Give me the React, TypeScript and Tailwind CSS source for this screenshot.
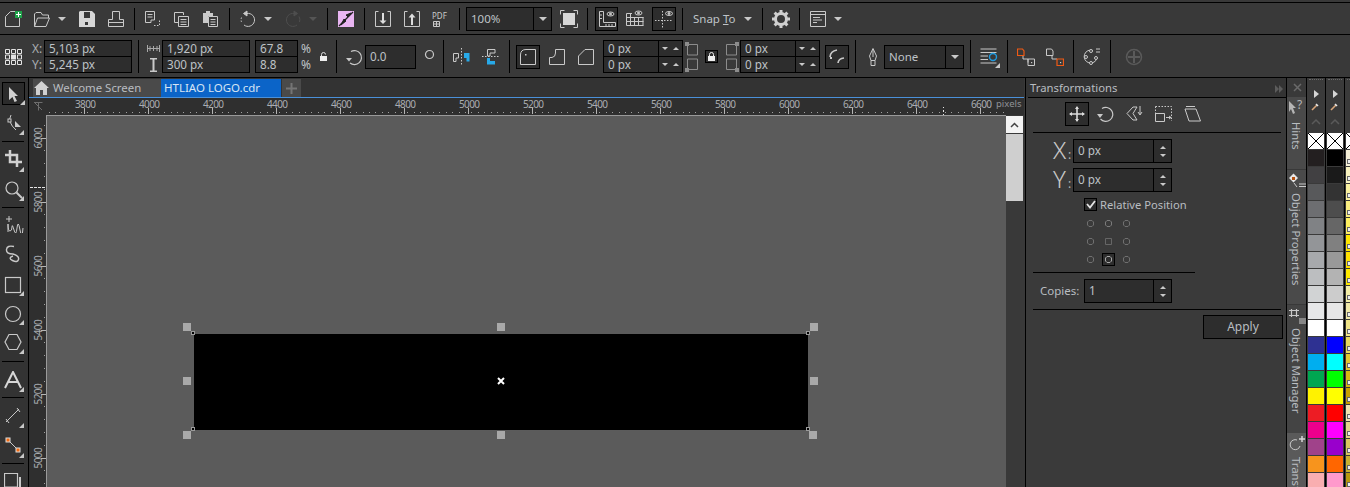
import React from "react";

const FONT = "font-['Noto_Sans','Open_Sans',sans-serif]";

// small svg wrapper, position comes through className
function Ico({ className, w, h, children }: { className: string; w: number; h: number; children: React.ReactNode }) {
  return (
    <svg
      className={`absolute ${className}`}
      width={w}
      height={h}
      viewBox={`0 0 ${w} ${h}`}
      fill="none"
      stroke="#c9c9c9"
      strokeWidth="1"
    >
      {children}
    </svg>
  );
}

function Sep({ className }: { className: string }) {
  return <div className={`absolute w-px bg-black ${className}`} />;
}

function Down({ className, dim }: { className: string; dim?: boolean }) {
  return (
    <div
      className={`absolute h-0 w-0 border-x-[4px] border-t-[4px] border-x-transparent ${
        dim ? "border-t-[#555]" : "border-t-[#c9c9c9]"
      } ${className}`}
    />
  );
}

function Corner({ className }: { className: string }) {
  return (
    <div className={`absolute h-0 w-0 border-b-[5px] border-l-[5px] border-b-[#c9c9c9] border-l-transparent ${className}`} />
  );
}

function Field({ className, children }: { className: string; children: React.ReactNode }) {
  return (
    <div className={`absolute flex items-center border border-black bg-[#2d2d2d] pl-1 text-[11.7px] text-[#bfc3c7] ${className}`}>
      {children}
    </div>
  );
}

function Spin({ className }: { className: string }) {
  return (
    <div className={`absolute flex items-center justify-center gap-[5px] border-l border-black ${className}`}>
      <div className="h-0 w-0 border-x-[3px] border-t-[3px] border-x-transparent border-t-[#c9c9c9]" />
      <div className="h-0 w-0 border-x-[3px] border-b-[3px] border-x-transparent border-b-[#c9c9c9]" />
    </div>
  );
}

function VSpin({ className }: { className: string }) {
  return (
    <div className={`absolute flex flex-col items-center justify-center gap-[5px] border-l border-black ${className}`}>
      <div className="h-0 w-0 border-x-[3px] border-b-[3px] border-x-transparent border-b-[#c9c9c9]" />
      <div className="h-0 w-0 border-x-[3px] border-t-[3px] border-x-transparent border-t-[#c9c9c9]" />
    </div>
  );
}

function Handle({ className }: { className: string }) {
  return <div className={`absolute h-2 w-2 bg-[#a9a9a9] ${className}`} />;
}

const hLabels = ["3800", "4000", "4200", "4400", "4600", "4800", "5000", "5200", "5400", "5600", "5800", "6000", "6200", "6400", "6600"];
const vLabels = ["6000", "5800", "5600", "5400", "5200", "5000"];

const col1 = ["#231f20", "#414042", "#58595b", "#6d6e71", "#808285", "#939598", "#a7a9ac", "#bcbec0", "#d1d3d4", "#e6e7e8", "#ffffff", "#2e3192", "#00aeef", "#00a651", "#fff200", "#ed1c24", "#ec008c", "#a0428a", "#f7941d", "#f9aeb0"];
const col2 = ["#000000", "#1a1a1a", "#333333", "#4d4d4d", "#666666", "#808080", "#999999", "#b3b3b3", "#cccccc", "#e6e6e6", "#ffffff", "#0000ff", "#00ffff", "#00ff00", "#ffff00", "#ff0000", "#ff00ff", "#9900cc", "#ff6600", "#ff99cc"];
const col3 = ["#f5f0d8", "#f8f2c0", "#f9f0a0", "#fbee80", "#fff060", "#ffe600", "#ffe000", "#ffe900", "#f3eda8", "#f0e8a8", "#f0e488", "#e8d860", "#e0c830", "#d8b810", "#c8a000", "#f0e4b0", "#e4d488", "#d8c860", "#c8b030", "#b89810"];

function Swatches({ colors, className, marks }: { colors: string[]; className: string; marks?: boolean }) {
  return (
    <div className={`absolute top-[133px] flex flex-col gap-px ${className}`}>
      <svg width="16" height="16" viewBox="0 0 16 16" className="bg-white">
        <path d="M0 0L16 16M16 0L0 16" stroke="#000" />
      </svg>
      {colors.map((c, i) => (
        <div key={i} className="relative h-4 w-4" style={{ backgroundColor: c }}>
          {marks && <div className="absolute left-[1px] top-[9px] h-[5px] w-[5px] border border-[#666] bg-[#eee]" />}
        </div>
      ))}
    </div>
  );
}

function TopBar() {
  return (
    <>
      {/* row 1 */}
      <Ico className="left-[4px] top-[10px]" w={18} h={18}>
        <path d="M1.5 6.5L6.5 1.5H11M15.5 8V16.5H1.5V6.5" />
        <rect x="11" y="1" width="7" height="7" fill="#1fa34a" stroke="none" />
        <path d="M14.5 2V7M12 4.5H17" stroke="#fff" />
      </Ico>
      <Ico className="left-[33px] top-[11px]" w={18} h={17}>
        <path d="M1.5 15.5V3L3 1.5H8L9.5 4H15.5V7" />
        <path d="M1.5 15.5H13L16.5 7H4.5L1.5 15.5Z" />
      </Ico>
      <Down className="left-[58px] top-[17px]" />
      <Ico className="left-[79px] top-[11px]" w={17} h={17}>
        <path d="M1 0H13L16 3V16H0V1Z" fill="#d6d6d6" stroke="none" />
        <rect x="5" y="1" width="6" height="6" fill="#383838" stroke="none" />
        <rect x="6" y="11" width="3" height="3" fill="#383838" stroke="none" />
      </Ico>
      <Ico className="left-[107px] top-[10px]" w={18} h={18}>
        <path d="M5.5 9.5V1.5H12.5V9.5M5.5 9.5H1.5V16.5H16.5V9.5H12.5M1.5 12.5H16.5" />
      </Ico>
      <Sep className="left-[134px] top-[8px] h-[22px]" />
      <Ico className="left-[144px] top-[10px]" w={18} h={18}>
        <path d="M1.5 1.5H10.5V10H7V12.5H1.5ZM3.5 4.5H8.5M3.5 7H8.5" />
        <path d="M10 15.5H15.5V10" strokeDasharray="1.5 1.5" />
      </Ico>
      <Ico className="left-[173px] top-[10px]" w={18} h={18}>
        <path d="M1.5 2.5H10.5V5M1.5 2.5V12.5H5" />
        <path d="M5.5 6.5H15.5V16.5H5.5ZM7.5 9.5H13.5M7.5 12H13.5M7.5 14.5H13.5" />
      </Ico>
      <Ico className="left-[202px] top-[10px]" w={18} h={18}>
        <path d="M1 3H4V1H8V3H11V6H6V13H1Z" fill="#c9c9c9" stroke="none" />
        <path d="M6.5 6.5H15.5V16.5H6.5ZM8.5 9.5H13.5M8.5 12H13.5M8.5 14.5H13.5" />
      </Ico>
      <Sep className="left-[229px] top-[8px] h-[22px]" />
      <Ico className="left-[239px] top-[10px]" w={18} h={18}>
        <path d="M8 3.5A6.5 6.5 0 1 1 5 15" />
        <path d="M2.5 12A6.5 6.5 0 0 1 3 6.5" strokeDasharray="1.5 1.5" />
        <path d="M8 1V6L4.5 3.5Z" fill="#c9c9c9" />
      </Ico>
      <Down className="left-[264px] top-[17px]" />
      <Ico className="left-[284px] top-[10px]" w={18} h={18}>
        <path d="M10 3.5A6.5 6.5 0 1 0 13 15M15.5 12A6.5 6.5 0 0 0 15 6.5" stroke="#4e4e4e" />
        <path d="M10 1V6L13.5 3.5Z" fill="#4e4e4e" stroke="#4e4e4e" />
      </Ico>
      <Down className="left-[309px] top-[17px]" dim />
      <Sep className="left-[327px] top-[8px] h-[22px]" />
      <Ico className="left-[338px] top-[11px]" w={16} h={16}>
        <rect x="0" y="0" width="16" height="16" fill="#e9b5f2" stroke="none" />
        <path d="M1 15L15 1" stroke="#222" strokeWidth="1.2" />
        <path d="M6 8L8 10L3 14ZM10 6L8 4L13 2Z" fill="#222" stroke="#222" />
      </Ico>
      <Sep className="left-[364px] top-[8px] h-[22px]" />
      <Ico className="left-[375px] top-[11px]" w={16} h={16}>
        <path d="M3.5 .5H.5V15.5H15.5V.5H12.5" />
        <path d="M8 2V11" stroke="#ddd" strokeWidth="2" />
        <path d="M4.5 9.5H11.5L8 13Z" fill="#ddd" stroke="none" />
      </Ico>
      <Ico className="left-[404px] top-[11px]" w={16} h={16}>
        <path d="M3.5 .5H.5V15.5H15.5V.5H12.5" />
        <path d="M8 6V14" stroke="#ddd" strokeWidth="2" />
        <path d="M4.5 6.5H11.5L8 2.5Z" fill="#ddd" stroke="none" />
      </Ico>
      <span className="absolute left-[432px] top-[11px] text-[8px] leading-[10px] text-[#c9c9c9]">PDF</span>
      <Ico className="left-[433px] top-[21px]" w={8} h={7}>
        <path d="M.5 .5H6.5V5.5H.5ZM3.5 .5V5.5M.5 3H6.5" />
      </Ico>
      <Sep className="left-[459px] top-[8px] h-[22px]" />
      <Field className="left-[466px] top-[7px] h-[24px] w-[86px] !text-[11.5px]">100%</Field>
      <div className="absolute left-[533px] top-[8px] h-[22px] w-px bg-black" />
      <Down className="left-[539px] top-[17px]" />
      <Ico className="left-[560px] top-[10px]" w={18} h={18}>
        <path d="M.5 4.5V.5H4.5M13.5 .5H17.5V4.5M17.5 13.5V17.5H13.5M4.5 17.5H.5V13.5" />
        <rect x="3" y="3" width="12" height="12" fill="#d6d6d6" stroke="none" />
      </Ico>
      <Sep className="left-[587px] top-[8px] h-[22px]" />
      <div className="absolute left-[595px] top-[7px] h-[24px] w-[23px] border border-black bg-[#2d2d2d]" />
      <Ico className="left-[597px] top-[10px]" w={20} h={18}>
        <path d="M2.5 1.5V16.5H18.5V12.5H6.5V1.5ZM2.5 5H5M2.5 8.5H5M9 16V14M12 16V14M15 16V14" />
        <ellipse cx="13.5" cy="4" rx="3.5" ry="2" />
        <circle cx="13.5" cy="4" r="1" fill="#c9c9c9" />
      </Ico>
      <Ico className="left-[626px] top-[10px]" w={18} h={18}>
        <path d="M.5 3.5H6M.5 7.5H17.5M.5 11.5H17.5M.5 15.5H17.5M.5 3.5V15.5M4.5 3.5V15.5M8.5 7V15.5M12.5 7V15.5M17 7V15.5" />
        <ellipse cx="12.5" cy="3" rx="3.5" ry="2" />
        <circle cx="12.5" cy="3" r="1" fill="#c9c9c9" />
      </Ico>
      <div className="absolute left-[652px] top-[7px] h-[24px] w-[24px] border border-black bg-[#2d2d2d]" />
      <Ico className="left-[654px] top-[10px]" w={20} h={18}>
        <path d="M1 10.5H18M8.5 1V18" strokeDasharray="1.5 1.5" />
        <ellipse cx="15" cy="3.5" rx="3.5" ry="2" />
        <circle cx="15" cy="3.5" r="1" fill="#c9c9c9" />
      </Ico>
      <Sep className="left-[682px] top-[8px] h-[22px]" />
      <span className="absolute left-[693px] top-[10px] text-[11.5px] leading-[18px] text-[#bfc3c7]">
        Snap <span className="underline">T</span>o
      </span>
      <Down className="left-[744px] top-[17px]" />
      <Sep className="left-[762px] top-[8px] h-[22px]" />
      <Ico className="left-[772px] top-[10px]" w={18} h={18}>
        <circle cx="9" cy="9" r="5.5" stroke="#d0d0d0" strokeWidth="3" />
        <path d="M9 0V3M9 15V18M0 9H3M15 9H18M2.6 2.6L4.8 4.8M13.2 13.2L15.4 15.4M2.6 15.4L4.8 13.2M13.2 4.8L15.4 2.6" stroke="#d0d0d0" strokeWidth="3" />
      </Ico>
      <Sep className="left-[799px] top-[8px] h-[22px]" />
      <Ico className="left-[810px] top-[10px]" w={17} h={17}>
        <path d="M.5 1.5H15.5V16.5H.5ZM.5 4.5H15.5M3 7.5H10M3 10H12M3 12.5H7" />
      </Ico>
      <Down className="left-[834px] top-[17px]" />

      {/* row 2 */}
      <Ico className="left-[5px] top-[49px]" w={17} h={16}>
        <path d="M.5 .5H4.5V4.5H.5ZM6.5 .5H10.5V4.5H6.5ZM12.5 .5H16.5V4.5H12.5ZM.5 6H4.5V10H.5ZM12.5 6H16.5V10H12.5ZM.5 11.5H4.5V15.5H.5ZM6.5 11.5H10.5V15.5H6.5ZM12.5 11.5H16.5V15.5H12.5Z" stroke="#e4e4e4" />
        <rect x="6" y="5.5" width="5" height="5" fill="#e4e4e4" stroke="none" />
      </Ico>
      <span className="absolute left-[32px] top-[40px] text-[12px] leading-[17px] text-[#a9adb1]">X:</span>
      <span className="absolute left-[32px] top-[56px] text-[12px] leading-[17px] text-[#a9adb1]">Y:</span>
      <Field className="left-[44px] top-[40px] h-[17px] w-[88px]">5,103 px</Field>
      <Field className="left-[44px] top-[56px] h-[17px] w-[88px]">5,245 px</Field>
      <Sep className="left-[138px] top-[40px] h-[33px]" />
      <Ico className="left-[147px] top-[45px]" w={13} h={7}>
        <path d="M.5 0V7M12.5 0V7M1 3.5H12M3 1V6M6.5 1V6M10 1V6" stroke="#a9a9a9" />
      </Ico>
      <Ico className="left-[149px] top-[58px]" w={9} h={14}>
        <path d="M1 .5H8M1 13.5H8M4.5 1V13" stroke="#c9c9c9" strokeWidth="2" />
      </Ico>
      <Field className="left-[162px] top-[40px] h-[17px] w-[88px]">1,920 px</Field>
      <Field className="left-[162px] top-[56px] h-[17px] w-[88px]">300 px</Field>
      <Field className="left-[255px] top-[40px] h-[17px] w-[43px]">67.8</Field>
      <Field className="left-[255px] top-[56px] h-[17px] w-[43px]">8.8</Field>
      <span className="absolute left-[301px] top-[40px] text-[12px] leading-[17px] text-[#bfc3c7]">%</span>
      <span className="absolute left-[301px] top-[56px] text-[12px] leading-[17px] text-[#bfc3c7]">%</span>
      <Ico className="left-[320px] top-[52px]" w={7} h={9}>
        <path d="M1.5 4V2.5A2 2 0 0 1 5.5 2.5" stroke="#ddd" />
        <rect x="0" y="4" width="7" height="5" fill="#eee" stroke="none" />
      </Ico>
      <Sep className="left-[336px] top-[40px] h-[33px]" />
      <Ico className="left-[346px] top-[49px]" w={18} h={17}>
        <path d="M5 2.5A7 7 0 1 1 4 14" strokeWidth="1.2" />
        <path d="M0 9H6L3 12.5Z" fill="#c9c9c9" stroke="none" />
      </Ico>
      <Field className="left-[365px] top-[45px] h-[24px] w-[51px]">0.0</Field>
      <Ico className="left-[424px] top-[49px]" w={11} h={11}>
        <circle cx="5.5" cy="5.5" r="4" strokeWidth="1.2" />
      </Ico>
      <Sep className="left-[443px] top-[40px] h-[33px]" />
      <Ico className="left-[453px] top-[48px]" w={17} h={17}>
        <path d="M8.5 0V17" strokeDasharray="1.5 1.5" />
        <path d="M.5 5.5H5.5V10H3V13.5H.5Z" />
        <path d="M11 5H16.5V13.5H13.5V10H11Z" fill="#28a9e8" stroke="none" />
      </Ico>
      <Ico className="left-[482px] top-[48px]" w={17} h={17}>
        <path d="M0 8.5H17" strokeDasharray="1.5 1.5" />
        <path d="M5.5 1.5H13V5H8V8H5.5Z" />
        <path d="M5 10H8V13H13V16.5H5Z" fill="#28a9e8" stroke="none" />
      </Ico>
      <Sep className="left-[509px] top-[40px] h-[33px]" />
      <div className="absolute left-[516px] top-[45px] h-[24px] w-[24px] border border-black bg-[#2d2d2d]" />
      <Ico className="left-[520px] top-[49px]" w={16} h={16}>
        <path d="M.5 15.5V6Q.5 .5 6 .5H15.5V15.5Z" />
        <rect x="5" y="5" width="1.5" height="1.5" fill="#c9c9c9" stroke="none" />
      </Ico>
      <Ico className="left-[549px] top-[49px]" w={16} h={16}>
        <path d="M.5 15.5V8.5H3Q6.5 8 6.5 4V.5H15.5V15.5Z" />
      </Ico>
      <Ico className="left-[578px] top-[49px]" w={16} h={16}>
        <path d="M.5 15.5V7L7 .5H15.5V15.5Z" />
      </Ico>
      <Field className="left-[603px] top-[40px] h-[17px] w-[80px]">0 px</Field>
      <Field className="left-[603px] top-[56px] h-[17px] w-[80px]">0 px</Field>
      <Spin className="left-[658px] top-[41px] h-[15px] w-[24px]" />
      <Spin className="left-[658px] top-[57px] h-[15px] w-[24px]" />
      <Ico className="left-[685px] top-[42px]" w={14} h={14}>
        <path d="M2.5 2.5H12.5V13H2.5Z" stroke="#8c8c8c" />
        <rect x="0" y="0" width="4" height="4" fill="#8c8c8c" stroke="none" />
      </Ico>
      <Ico className="left-[685px] top-[58px]" w={14} h={14}>
        <path d="M2.5 1H12.5V11.5H2.5Z" stroke="#8c8c8c" />
        <rect x="0" y="10" width="4" height="4" fill="#8c8c8c" stroke="none" />
      </Ico>
      <div className="absolute left-[705px] top-[50px] h-[13px] w-[13px] border border-black bg-[#2d2d2d]" />
      <Ico className="left-[708px] top-[52px]" w={7} h={9}>
        <path d="M1.5 4V2.5A2 2 0 0 1 5.5 2.5V4" stroke="#eee" />
        <rect x="0" y="4" width="7" height="5" fill="#eee" stroke="none" />
      </Ico>
      <Ico className="left-[725px] top-[42px]" w={14} h={14}>
        <path d="M1.5 2.5H11.5V13H1.5Z" stroke="#8c8c8c" />
        <rect x="10" y="0" width="4" height="4" fill="#8c8c8c" stroke="none" />
      </Ico>
      <Ico className="left-[725px] top-[58px]" w={14} h={14}>
        <path d="M1.5 1H11.5V11.5H1.5Z" stroke="#8c8c8c" />
        <rect x="10" y="10" width="4" height="4" fill="#8c8c8c" stroke="none" />
      </Ico>
      <Field className="left-[740px] top-[40px] h-[17px] w-[80px]">0 px</Field>
      <Field className="left-[740px] top-[56px] h-[17px] w-[80px]">0 px</Field>
      <Spin className="left-[795px] top-[41px] h-[15px] w-[24px]" />
      <Spin className="left-[795px] top-[57px] h-[15px] w-[24px]" />
      <div className="absolute left-[825px] top-[45px] h-[24px] w-[24px] border border-black bg-[#2d2d2d]" />
      <Ico className="left-[829px] top-[49px]" w={17} h={16}>
        <path d="M1 8Q1.5 2 8 1" strokeWidth="1.6" />
        <path d="M9 14Q9.5 9.5 15 9" strokeWidth="1.6" />
        <rect x="1" y="8" width="2" height="2" fill="#c9c9c9" stroke="none" />
      </Ico>
      <Sep className="left-[855px] top-[40px] h-[33px]" />
      <Ico className="left-[868px] top-[48px]" w={10} h={18}>
        <path d="M5 .5L8.5 8L7 12.5H3L1.5 8ZM5 1V9M3 12.5V17.5H7V12.5" />
      </Ico>
      <Field className="left-[884px] top-[45px] h-[24px] w-[80px] !text-[11.5px]">None</Field>
      <div className="absolute left-[945px] top-[46px] h-[22px] w-px bg-black" />
      <Down className="left-[951px] top-[55px]" />
      <Sep className="left-[970px] top-[40px] h-[33px]" />
      <Ico className="left-[980px] top-[48px]" w={20} h={20}>
        <path d="M.5 1H16.5M.5 4.5H16.5M.5 8H8M.5 11.5H8M.5 15H16.5" />
        <circle cx="13" cy="9" r="3.5" stroke="#1f9be0" strokeWidth="1.4" />
        <path d="M20 15V20H15Z" fill="#c9c9c9" stroke="none" />
      </Ico>
      <Sep className="left-[1007px] top-[40px] h-[33px]" />
      <Ico className="left-[1017px] top-[48px]" w={18} h={18}>
        <path d="M6 7.5V11H11V14.5" />
        <path d="M11 11H17.5V17.5H11Z" />
        <rect x="14" y="14" width="1.2" height="1.2" fill="#c9c9c9" stroke="none" />
        <path d="M.5 1H5.5L7 3V7.5H.5Z" stroke="#f05a14" strokeWidth="1.2" />
      </Ico>
      <Ico className="left-[1046px] top-[48px]" w={18} h={18}>
        <path d="M.5 1H5.5L7 3V7.5H.5Z" />
        <path d="M6 7.5V11H11" />
        <path d="M11 11H17.5V17.5H11Z" stroke="#f05a14" strokeWidth="1.2" />
        <rect x="14" y="14" width="1.2" height="1.2" fill="#c9c9c9" stroke="none" />
      </Ico>
      <Sep className="left-[1073px] top-[40px] h-[33px]" />
      <Ico className="left-[1083px] top-[48px]" w={18} h={17}>
        <path d="M10 2.5A6.5 6.5 0 1 0 14 10" />
        <circle cx="3" cy="9" r="1.5" fill="#383838" />
        <circle cx="8" cy="15" r="1.5" fill="#383838" />
        <circle cx="13" cy="10" r="1.5" fill="#383838" />
        <circle cx="8" cy="3" r="1.5" fill="#383838" />
        <path d="M13 1H17M13 4H17" />
      </Ico>
      <Sep className="left-[1110px] top-[40px] h-[33px]" />
      <Ico className="left-[1125px] top-[48px]" w={18} h={18}>
        <circle cx="9" cy="9" r="7.5" stroke="#5a5a5a" strokeWidth="1.5" />
        <path d="M9 3V15M3 9H15" stroke="#5a5a5a" strokeWidth="2" />
      </Ico>
    </>
  );
}

function LeftTools() {
  return (
    <div className="absolute left-0 top-[78px] h-[409px] w-[28px] bg-[#333333]">
      {/* y below is relative to 78 */}
      <div className="absolute left-[2px] top-[4px] h-[23px] w-[23px] border border-black bg-[#2b2b2b]" />
      <Ico className="left-[9px] top-[9px]" w={10} h={15}>
        <path d="M0 0L9 9H5.5L8 14L5.5 15L3.5 10L0 13Z" fill="#d0d0d0" stroke="none" />
      </Ico>
      <Corner className="left-[20px] top-[22px]" />
      <Ico className="left-[6px] top-[36px]" w={18} h={18}>
        <path d="M5 1Q1 8 10 16" />
        <rect x="2" y="5" width="3" height="3" fill="#333" />
        <path d="M9 7L15 13H9Z" fill="#c9c9c9" stroke="none" />
      </Ico>
      <Corner className="left-[19px] top-[52px]" />
      <div className="absolute left-[2px] top-[63px] h-px w-[22px] bg-black" />
      <Ico className="left-[5px] top-[72px]" w={17} h={17}>
        <path d="M5 0V12H17M0 5H12V17" stroke="#d0d0d0" strokeWidth="2.5" />
      </Ico>
      <Corner className="left-[19px] top-[89px]" />
      <Ico className="left-[5px] top-[103px]" w={18} h={18}>
        <circle cx="7" cy="7" r="6" strokeWidth="1.2" />
        <path d="M11.5 11.5L17 17" strokeWidth="2" />
      </Ico>
      <Corner className="left-[19px] top-[118px]" />
      <div className="absolute left-[2px] top-[129px] h-px w-[22px] bg-black" />
      <Ico className="left-[4px] top-[137px]" w={20} h={18}>
        <path d="M5 1V7M2 4H8" />
        <path d="M4 17V9Q4 16 6 16T8 12T10 15T13 13T16 15T19 13" />
      </Ico>
      <Ico className="left-[5px] top-[167px]" w={16} h={18}>
        <path d="M9 1.5Q2 0 1.5 4.5T8 9Q14.5 11 13.5 14.5T7.5 15.5T8 11" strokeWidth="1.4" />
      </Ico>
      <Ico className="left-[4px] top-[198px]" w={18} h={18}>
        <rect x="1.5" y="1.5" width="15" height="15" strokeWidth="1.2" />
      </Ico>
      <Corner className="left-[19px] top-[213px]" />
      <Ico className="left-[4px] top-[227px]" w={18} h={18}>
        <circle cx="9" cy="9" r="7.5" strokeWidth="1.2" />
      </Ico>
      <Corner className="left-[19px] top-[242px]" />
      <Ico className="left-[4px] top-[255px]" w={18} h={18}>
        <path d="M5 1.5H13L17 9L13 16.5H5L1 9Z" strokeWidth="1.2" />
      </Ico>
      <Corner className="left-[19px] top-[271px]" />
      <div className="absolute left-[2px] top-[283px] h-px w-[22px] bg-black" />
      <Ico className="left-[4px] top-[293px]" w={18} h={18}>
        <path d="M1 17L9 1L17 17M4 11H14" stroke="#d6d6d6" strokeWidth="2" />
      </Ico>
      <Corner className="left-[19px] top-[309px]" />
      <div className="absolute left-[2px] top-[319px] h-px w-[22px] bg-black" />
      <Ico className="left-[4px] top-[329px]" w={18} h={18}>
        <path d="M2 15L15 2M2 12L5 16M13 1L16 5" />
      </Ico>
      <Corner className="left-[19px] top-[345px]" />
      <Ico className="left-[4px] top-[358px]" w={18} h={18}>
        <path d="M4 4L14 14" />
        <rect x="2" y="2" width="4" height="4" fill="#f26a10" stroke="#ddd" />
        <rect x="12" y="12" width="4" height="4" fill="#f26a10" stroke="#ddd" />
      </Ico>
      <Corner className="left-[19px] top-[375px]" />
      <div className="absolute left-[2px] top-[385px] h-px w-[22px] bg-black" />
      <Ico className="left-[4px] top-[395px]" w={20} h={14}>
        <path d="M.5 .5H13.5V14H.5Z" strokeWidth="1.2" />
        <path d="M16 4V14" strokeWidth="2" />
      </Ico>
    </div>
  );
}

function Rulers() {
  return (
    <>
      {/* top ruler */}
      <div className="absolute left-[29px] top-[98px] h-[17px] w-[995px] bg-[#2f2f2f]" />
      <div className="absolute left-[29px] top-[98px] h-[389px] w-[17px] bg-[#2f2f2f]" />
      <Ico className="left-[34px] top-[102px]" w={9} h={9}>
        <path d="M0 .5H8.5M4.5 0V8.5M1 1L8 8" stroke="#6d6d6d" />
      </Ico>
      <div className="absolute left-[72px] top-[98px] flex text-[10px] leading-[12px] tracking-[-0.6px] text-[#a9adb1]">
        {hLabels.map((l) => (
          <span key={l} className="w-16 pl-[3px]">{l}</span>
        ))}
      </div>
      <span className="absolute left-[996px] top-[98px] text-[9.5px] leading-[12px] text-[#8f9397]">pixels</span>
      <svg className="absolute left-[46px] top-[107px]" width="960" height="8" viewBox="0 0 960 8">
        {Array.from({ length: 150 }, (_, i) => (
          <rect key={i} x={Math.round(3 + i * 6.4)} y="5" width="1" height="1" fill="#a0a0a0" />
        ))}
        {hLabels.map((_, i) => (
          <rect key={i} x={38 + i * 64} y="1" width="1" height="6" fill="#b5b5b5" />
        ))}
        <path d="M897.5 -1V8" stroke="#e6e6e6" strokeDasharray="2 2" />
      </svg>
      {/* left ruler */}
      <div className="absolute left-[32px] top-[106px] flex flex-col text-[10px] leading-[12px] tracking-[-0.6px] text-[#a9adb1]">
        {vLabels.map((l) => (
          <div key={l} className="flex h-16 items-center justify-center">
            <span className="rotate-180 [writing-mode:vertical-rl]">{l}</span>
          </div>
        ))}
      </div>
      <svg className="absolute left-[38px] top-[115px]" width="8" height="372" viewBox="0 0 8 372">
        {Array.from({ length: 30 }, (_, i) => (
          <rect key={i} x="6" y={Math.round(9.8 + i * 12.8)} width="1" height="1" fill="#a0a0a0" />
        ))}
        {vLabels.map((_, i) => (
          <rect key={i} x="3" y={23 + i * 64} width="5" height="1" fill="#b5b5b5" />
        ))}
      </svg>
      <div className="absolute left-[30px] top-[187px] h-0 w-[15px] border-t border-dashed border-[#e6e6e6]" />
    </>
  );
}

function Canvas() {
  return (
    <>
      <div className="absolute left-[46px] top-[115px] h-[372px] w-[960px] border-l border-t border-[#9a9a9a] bg-[#5b5b5b]" />
      {/* scrollbar */}
      <div className="absolute left-[1006px] top-[115px] h-[372px] w-[17px] bg-[#393939]" />
      <div className="absolute left-[1006px] top-[116px] flex h-[17px] w-[17px] items-center justify-center bg-[#f4f4f4]">
        <svg width="9" height="6" viewBox="0 0 9 6" fill="none" stroke="#444" strokeWidth="1.5">
          <path d="M1 5L4.5 1.5L8 5" />
        </svg>
      </div>
      <div className="absolute left-[1006px] top-[134px] h-[67px] w-[17px] bg-[#cfcfcf]" />

      {/* selected rectangle */}
      <div className="absolute left-[194px] top-[334px] h-[96px] w-[614px] bg-black" />
      <div className="absolute left-[191px] top-[331px] h-[4px] w-[4px] border border-[#9a9a9a] bg-black" />
      <div className="absolute left-[806px] top-[331px] h-[4px] w-[4px] border border-[#9a9a9a] bg-black" />
      <div className="absolute left-[191px] top-[427px] h-[4px] w-[4px] border border-[#9a9a9a] bg-black" />
      <div className="absolute left-[806px] top-[427px] h-[4px] w-[4px] border border-[#9a9a9a] bg-black" />
      <Handle className="left-[183px] top-[323px]" />
      <Handle className="left-[497px] top-[323px]" />
      <Handle className="left-[810px] top-[323px]" />
      <Handle className="left-[183px] top-[377px]" />
      <Handle className="left-[810px] top-[377px]" />
      <Handle className="left-[183px] top-[431px]" />
      <Handle className="left-[497px] top-[431px]" />
      <Handle className="left-[809px] top-[431px]" />
      <svg className="absolute left-[497px] top-[377px]" width="8" height="8" viewBox="0 0 8 8">
        <path d="M1 1L7 7M7 1L1 7" stroke="#fff" strokeWidth="2" />
      </svg>
    </>
  );
}

function Docker() {
  return (
    <>
      <div className="absolute left-[1025px] top-[78px] h-[409px] w-px bg-black" />
      <div className="absolute left-[1026px] top-[78px] h-[409px] w-[260px] bg-[#3a3a3a]" />
      <div className="absolute left-[1026px] top-[78px] h-[19px] w-[260px] bg-[#333333]" />
      <span className="absolute left-[1030px] top-[79px] text-[11.3px] leading-[18px] text-[#b9bdc1]">Transformations</span>
      <div className="absolute left-[1275px] top-[85px] h-0 w-0 border-y-[4px] border-l-[4px] border-y-transparent border-l-[#5c5c5c]" />
      <div className="absolute left-[1279px] top-[85px] h-0 w-0 border-y-[4px] border-l-[4px] border-y-transparent border-l-[#5c5c5c]" />
      <svg className="absolute left-[1293px] top-[83px]" width="9" height="9" viewBox="0 0 9 9">
        <path d="M1 1L8 8M8 1L1 8" stroke="#6a6a6a" strokeWidth="1.5" />
      </svg>
      <div className="absolute left-[1028px] top-[97px] h-px w-[258px] bg-black" />

      {/* tabs of the docker */}
      <div className="absolute left-[1065px] top-[102px] h-[24px] w-[24px] border border-black bg-[#2d2d2d]" />
      <Ico className="left-[1069px] top-[106px]" w={16} h={16}>
        <path d="M8 1V15M1 8H15" stroke="#dcdcdc" strokeWidth="1.6" />
        <path d="M8 0L10 3H6ZM8 16L10 13H6ZM0 8L3 6V10ZM16 8L13 6V10Z" fill="#dcdcdc" stroke="none" />
      </Ico>
      <Ico className="left-[1097px] top-[106px]" w={18} h={16}>
        <path d="M5 2.5A7 7 0 1 1 3.5 13" strokeWidth="1.2" />
        <path d="M0 8H6L3 12Z" fill="#c9c9c9" stroke="none" />
      </Ico>
      <Ico className="left-[1126px] top-[105px]" w={18} h={17}>
        <path d="M1 8.5L7 2H11L7 8.5L11 15H7ZM14 1V9M12 7L14 10L16 7" />
      </Ico>
      <Ico className="left-[1155px] top-[106px]" w={18} h={16}>
        <path d="M.5 .5H16.5V15" strokeDasharray="1.5 1.5" />
        <path d="M.5 .5V15" strokeDasharray="1.5 1.5" />
        <path d="M.5 7.5H9.5V15.5H.5ZM11 11.5H16M14 10L16 11.5L14 13" />
      </Ico>
      <Ico className="left-[1184px] top-[105px]" w={18} h={17}>
        <path d="M1 4H12L16.5 16H5ZM2 1.5H11" />
      </Ico>
      <div className="absolute left-[1033px] top-[132px] h-px w-[248px] bg-black" />

      {/* position */}
      <span className="absolute left-[1053px] top-[135px] text-[24px] font-light leading-[30px] text-[#c8c8c8]">X</span>
      <span className="absolute left-[1068px] top-[147px] text-[12px] leading-[16px] text-[#b5b5b5]">:</span>
      <Field className="left-[1073px] top-[139px] h-[24px] w-[99px]">0 px</Field>
      <VSpin className="left-[1153px] top-[140px] h-[22px] w-[18px]" />
      <span className="absolute left-[1053px] top-[164px] text-[24px] font-light leading-[30px] text-[#c8c8c8]">Y</span>
      <span className="absolute left-[1068px] top-[176px] text-[12px] leading-[16px] text-[#b5b5b5]">:</span>
      <Field className="left-[1073px] top-[168px] h-[24px] w-[99px]">0 px</Field>
      <VSpin className="left-[1153px] top-[169px] h-[22px] w-[18px]" />

      <div className="absolute left-[1084px] top-[198px] h-[13px] w-[13px] border border-black bg-[#2d2d2d]" />
      <Ico className="left-[1086px] top-[200px]" w={10} h={9}>
        <path d="M1 4L4 7.5L9 1" stroke="#e4e4e4" strokeWidth="1.8" />
      </Ico>
      <span className="absolute left-[1100px] top-[196px] text-[11.2px] leading-[17px] text-[#b9bdc1]">Relative Position</span>

      {/* reference points */}
      <Ico className="left-[1087px] top-[220px]" w={46} h={44}>
        <path d="M2 .5H5L6.5 2V5L5 6.5H2L.5 5V2Z" stroke="#6f6f6f" />
        <path d="M2 .5H5L6.5 2V5L5 6.5H2L.5 5V2Z" stroke="#7a7a7a" transform="translate(18 0)" />
        <path d="M2 .5H5L6.5 2V5L5 6.5H2L.5 5V2Z" stroke="#6f6f6f" transform="translate(36 0)" />
        <path d="M2 .5H5L6.5 2V5L5 6.5H2L.5 5V2Z" stroke="#6f6f6f" transform="translate(0 18)" />
        <path d="M18.5 18.5H24.5V24.5H18.5Z" stroke="#666" />
        <path d="M2 .5H5L6.5 2V5L5 6.5H2L.5 5V2Z" stroke="#6f6f6f" transform="translate(36 18)" />
        <path d="M2 .5H5L6.5 2V5L5 6.5H2L.5 5V2Z" stroke="#6f6f6f" transform="translate(0 36)" />
        <path d="M2 .5H5L6.5 2V5L5 6.5H2L.5 5V2Z" stroke="#6f6f6f" transform="translate(36 36)" />
      </Ico>
      <div className="absolute left-[1102px] top-[253px] h-[13px] w-[13px] border border-black bg-[#2d2d2d]" />
      <Ico className="left-[1105px] top-[256px]" w={7} h={7}>
        <path d="M2 .5H5L6.5 2V5L5 6.5H2L.5 5V2Z" stroke="#a5a5a5" />
      </Ico>

      <div className="absolute left-[1033px] top-[272px] h-px w-[162px] bg-black" />
      <span className="absolute left-[1040px] top-[282px] text-[11.5px] leading-[17px] text-[#b9bdc1]">Copies:</span>
      <Field className="left-[1084px] top-[279px] h-[24px] w-[88px]">1</Field>
      <VSpin className="left-[1153px] top-[280px] h-[22px] w-[18px]" />
      <div className="absolute left-[1033px] top-[309px] h-px w-[248px] bg-black" />
      <div className="absolute left-[1203px] top-[315px] flex h-[24px] w-[80px] items-center justify-center border border-black bg-[#2d2d2d] text-[12px] text-[#b9bdc1]">
        Apply
      </div>

      {/* vertical tabs */}
      <div className="absolute left-[1286px] top-[78px] h-[409px] w-px bg-black" />
      <div className="absolute left-[1287px] top-[97px] h-[72px] w-[19px] bg-[#4a4a4a]" />
      <div className="absolute left-[1287px] top-[170px] h-[134px] w-[19px] bg-[#4a4a4a]" />
      <div className="absolute left-[1287px] top-[305px] h-[128px] w-[19px] bg-[#444444]" />
      <div className="absolute left-[1287px] top-[433px] h-[54px] w-[19px] bg-[#5a5a5a]" />
      <Ico className="left-[1288px] top-[100px]" w={18} h={16}>
        <path d="M1 1L8 8H5L7 13L5 14L3 9L1 12Z" fill="#b5b5b5" stroke="none" />
      </Ico>
      <span className="absolute left-[1297px] top-[99px] text-[12px] leading-[12px] text-[#b5b5b5]">?</span>
      <span className="absolute left-[1288px] top-[122px] text-[11.3px] leading-[17px] text-[#b9bdc1] [writing-mode:vertical-rl]">Hints</span>
      <Ico className="left-[1288px] top-[172px]" w={18} h={17}>
        <path d="M1 6L5.5 1.5L10 6L5.5 10.5Z" fill="#e6e6e6" stroke="none" />
        <rect x="4" y="5" width="3" height="3" fill="#b5500f" stroke="none" />
        <path d="M11 12H18M11 14.5H18M6 11L9 15" />
      </Ico>
      <span className="absolute left-[1288px] top-[193px] text-[11.3px] leading-[17px] text-[#b9bdc1] [writing-mode:vertical-rl]">Object Properties</span>
      <Ico className="left-[1288px] top-[307px]" w={18} h={17}>
        <path d="M3.5 2V10M8.5 2V10M1 3.5H11M1 8.5H11" stroke="#c9c9c9" strokeWidth="1.2" />
        <path d="M11 12H18M11 14H18M11 16H18" />
      </Ico>
      <span className="absolute left-[1288px] top-[328px] text-[11.3px] leading-[17px] text-[#b9bdc1] [writing-mode:vertical-rl]">Object Manager</span>
      <Ico className="left-[1288px] top-[436px]" w={18} h={18}>
        <path d="M9 4A5 5 0 1 0 12 10" />
        <path d="M14 0V6M11 3H17" stroke="#d6d6d6" strokeWidth="1.5" />
      </Ico>
      <span className="absolute left-[1288px] top-[457px] text-[11.3px] leading-[17px] text-[#b9bdc1] [writing-mode:vertical-rl]">Transformations</span>

      {/* palettes */}
      <div className="absolute left-[1306px] top-[78px] h-[409px] w-px bg-black" />
      <div className="absolute left-[1307px] top-[78px] h-[409px] w-[43px] bg-[#3a3a3a]" />
      <div className="absolute left-[1325px] top-[78px] h-[409px] w-px bg-black" />
      <div className="absolute left-[1344px] top-[78px] h-[409px] w-px bg-black" />
      <div className="absolute left-[1309px] top-[79px] h-[3px] w-[14px] border-t border-dotted border-[#6a6a6a]" />
      <div className="absolute left-[1328px] top-[79px] h-[3px] w-[14px] border-t border-dotted border-[#6a6a6a]" />
      <div className="absolute left-[1347px] top-[79px] h-[3px] w-[3px] border-t border-dotted border-[#6a6a6a]" />
      <div className="absolute left-[1314px] top-[90px] h-0 w-0 border-y-[4px] border-l-[5px] border-y-transparent border-l-[#d6d6d6]" />
      <div className="absolute left-[1333px] top-[90px] h-0 w-0 border-y-[4px] border-l-[5px] border-y-transparent border-l-[#d6d6d6]" />
      <Ico className="left-[1311px] top-[103px]" w={8} h={8}>
        <path d="M1 7L6 2" stroke="#d9a77c" strokeWidth="1.6" />
        <path d="M5 1L7 3" stroke="#e6e6e6" strokeWidth="1.6" />
      </Ico>
      <Ico className="left-[1330px] top-[103px]" w={8} h={8}>
        <path d="M1 7L6 2" stroke="#d9a77c" strokeWidth="1.6" />
        <path d="M5 1L7 3" stroke="#e6e6e6" strokeWidth="1.6" />
      </Ico>
      <Ico className="left-[1311px] top-[119px]" w={10} h={6}>
        <path d="M1 5L5 1L9 5" stroke="#5a5a5a" strokeWidth="1.5" />
      </Ico>
      <Ico className="left-[1330px] top-[119px]" w={10} h={6}>
        <path d="M1 5L5 1L9 5" stroke="#5a5a5a" strokeWidth="1.5" />
      </Ico>
      <Swatches colors={col1} className="left-[1308px]" />
      <Swatches colors={col2} className="left-[1327px]" />
      <Swatches colors={col3} className="left-[1346px]" marks />
    </>
  );
}

export default function App() {
  return (
    <div className={`relative h-[487px] w-[1350px] overflow-hidden bg-[#393939] ${FONT}`}>
      <div className="absolute left-0 top-[2px] h-px w-full bg-black" />
      <div className="absolute left-0 top-[34px] h-px w-full bg-black" />
      <div className="absolute left-0 top-[77px] h-px w-full bg-black" />
      <TopBar />

      {/* document tabs */}
      <div className="absolute left-[28px] top-[78px] h-[409px] w-px bg-black" />
      <div className="absolute left-[29px] top-[78px] h-[20px] w-[995px] bg-[#333333]" />
      <div className="absolute left-[33px] top-[79px] flex h-[18px] w-[128px] items-center bg-[#4a4a4a] pl-[20px] text-[11.4px] text-[#b9bdc1]">
        Welcome Screen
      </div>
      <Ico className="left-[34px] top-[81px]" w={15} h={14}>
        <path d="M7.5 0L15 7H13V14H9V9H6V14H2V7H0Z" fill="#d0d0d0" stroke="none" />
      </Ico>
      <div className="absolute left-[161px] top-[79px] flex h-[18px] w-[120px] items-center bg-[#0b64c8] pl-[3px] text-[11.5px] text-[#d6e4f5]">
        HTLIAO LOGO.cdr
      </div>
      <div className="absolute left-[282px] top-[79px] flex h-[18px] w-[19px] items-center justify-center bg-[#4a4a4a]">
        <svg width="11" height="11" viewBox="0 0 11 11">
          <path d="M5.5 0V11M0 5.5H11" stroke="#757575" strokeWidth="2" />
        </svg>
      </div>
      <div className="absolute left-[29px] top-[97px] h-px w-[995px] bg-[#4a90d9]" />

      <Rulers />
      <Canvas />
      <LeftTools />
      <Docker />
    </div>
  );
}
